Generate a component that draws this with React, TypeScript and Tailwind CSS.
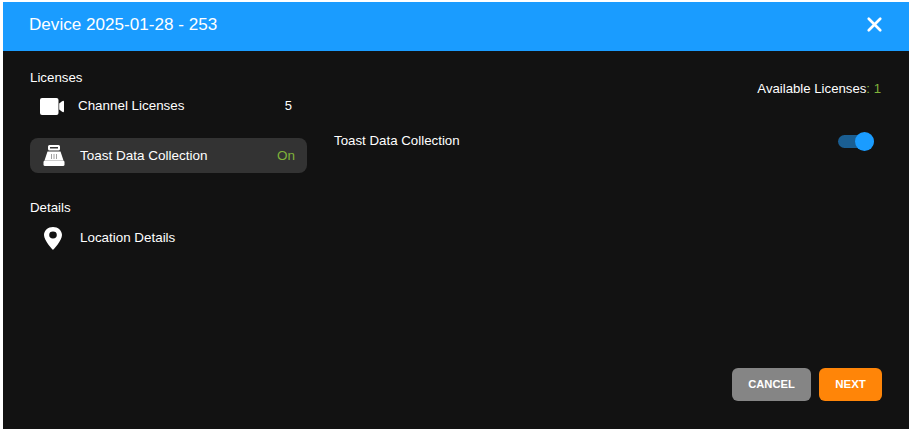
import React from 'react';
import { X } from 'lucide-react';

const font = { fontFamily: '"Liberation Sans", Arial, sans-serif' };

function CameraIcon() {
  return (
    <svg width="24" height="17" viewBox="0 0 24 17" fill="white">
      <rect x="0" y="0" width="18.5" height="17" rx="2" />
      <path d="M19.2 5.5 L21.8 3.4 Q24 2 24 4 V13 Q24 15 21.8 13.6 L19.2 11.5 Z" />
    </svg>
  );
}

function RegisterIcon() {
  return (
    <svg width="22" height="21" viewBox="0 0 22 21">
      <path fill="white" fillRule="evenodd" d="M6.5 0 H15.5 Q17 0 17 1.5 V4 Q17 5.5 15.5 5.5 H6.5 Q5 5.5 5 4 V1.5 Q5 0 6.5 0 Z M7 2 V3.6 H15 V2 Z" />
      <path fill="white" d="M4.5 6.5 H17.5 L20.5 15.5 H1.5 Z" />
      <rect x="0.5" y="15.5" width="21" height="5.5" rx="1.5" fill="white" />
      <path stroke="#a0a0a0" strokeWidth="1" d="M8.5 9 V14 M11 9 V14 M13.5 9 V14" />
    </svg>
  );
}

function PinIcon() {
  return (
    <svg width="18" height="23" viewBox="0 0 17 24" preserveAspectRatio="none">
      <path fill="white" fillRule="evenodd" d="M8.5 0 C3.8 0 0 3.7 0 8.4 C0 14.5 8.5 24 8.5 24 S17 14.5 17 8.4 C17 3.7 13.2 0 8.5 0 Z M8.5 12 A3.6 3.6 0 1 1 8.5 4.8 A3.6 3.6 0 1 1 8.5 12 Z" />
    </svg>
  );
}

export default function App() {
  return (
    <div className="h-[433px] w-[912px] overflow-hidden bg-white pl-[3px] pr-[3px] pt-[2px]" style={font}>
      <div className="flex h-[427px] w-full flex-col bg-[#121212] text-white">
        <header className="flex h-[49px] flex-none items-center justify-between bg-[#1a9cff] pb-[4px] pl-[26px] pr-[23px]">
          <h1 className="text-[17.1px] leading-none">Device 2025-01-28 - 253</h1>
          <X size={23} strokeWidth={2.8} />
        </header>

        <div className="flex min-h-0 flex-1">
          <aside className="w-[304px] flex-none pl-[27px] pt-[19px]">
            <div className="text-[13.3px] leading-[15px]">Licenses</div>
            <div className="mt-[9px] flex h-[24px] items-center pr-[15px]">
              <span className="ml-[10px] flex w-[38px] flex-none"><CameraIcon /></span>
              <span className="flex-1 text-[13.4px]">Channel Licenses</span>
              <span className="text-[13px]">5</span>
            </div>

            <div className="mt-[20px] flex h-[35px] items-center rounded-lg bg-[#333333] pl-[13px] pr-[12px]">
              <span className="flex w-[37px] flex-none"><RegisterIcon /></span>
              <span className="flex-1 pt-[2px] text-[13.5px]">Toast Data Collection</span>
              <span className="pt-[2px] text-[13.5px] text-[#7fb23a]">On</span>
            </div>

            <div className="mt-[27px] text-[13.3px] leading-[15px]">Details</div>
            <div className="mt-[11px] flex h-[24px] items-center pl-[14px]">
              <span className="flex w-[36px] flex-none"><PinIcon /></span>
              <span className="text-[13.4px]">Location Details</span>
            </div>
          </aside>

          <main className="flex min-w-0 flex-1 flex-col pb-[28px] pl-[27px] pr-[27px]">
            <div className="mr-[1px] mt-[30px] text-right text-[13.2px] leading-[15px]">
              Available Licenses<span className="text-[#7fb23a]">: 1</span>
            </div>
            <div className="mt-[33px] flex h-[24px] items-center justify-between">
              <span className="text-[13.3px]">Toast Data Collection</span>
              <div className="relative mr-[8px] h-[13px] w-[36px] rounded-full bg-[#1a5e92]">
                <div className="absolute right-0 top-[-3px] h-[19px] w-[19px] rounded-full bg-[#1a9cff]" />
              </div>
            </div>
            <div className="mt-auto flex justify-end gap-[8px]">
              <button className="h-[33px] w-[79px] rounded-md bg-[#858585] text-[11.2px] font-bold">CANCEL</button>
              <button className="h-[33px] w-[63px] rounded-md bg-[#ff8508] text-[11.5px] font-bold">NEXT</button>
            </div>
          </main>
        </div>
      </div>
    </div>
  );
}
